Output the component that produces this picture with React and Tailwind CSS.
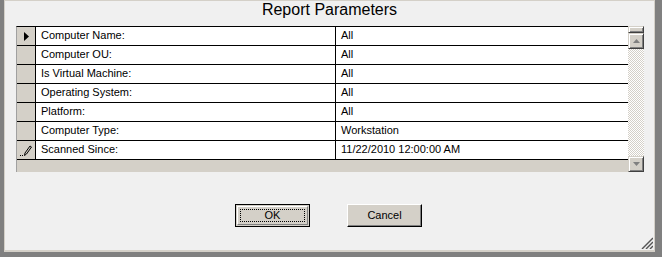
import React from 'react';

const ROWS = [
  { label: 'Computer Name:', value: 'All' },
  { label: 'Computer OU:', value: 'All' },
  { label: 'Is Virtual Machine:', value: 'All' },
  { label: 'Operating System:', value: 'All' },
  { label: 'Platform:', value: 'All' },
  { label: 'Computer Type:', value: 'Workstation' },
  { label: 'Scanned Since:', value: '11/22/2010 12:00:00 AM' },
];

// classic raised 3D look for scrollbar parts
const raised =
  'bg-[#d4d0c8] border border-t-[#d4d0c8] border-l-[#d4d0c8] border-b-[#404040] border-r-[#404040] shadow-[inset_1px_1px_#ffffff,inset_-1px_-1px_#808080]';

const RowMarker = ({ index, last }) => {
  if (index === 0) {
    return (
      <svg width="5" height="9" viewBox="0 0 5 9" className="mt-[5px] ml-[7px]">
        <polygon points="0,0 5,4.5 0,9" fill="#000" />
      </svg>
    );
  }
  if (last) {
    return (
      <svg width="12" height="12" viewBox="0 0 12 12" className="mt-[4px] ml-[3px]">
        <rect x="0" y="10" width="1" height="1" fill="#000" />
        <rect x="2" y="10" width="1" height="1" fill="#000" />
        <path d="M4.5 10.5 L5 8 L10 1 L11.5 2 L6.5 9 Z" fill="none" stroke="#000" strokeWidth="1" />
      </svg>
    );
  }
  return null;
};

const ScrollArrow = ({ up }) => (
  <svg width="7" height="4" viewBox="0 0 7 4">
    <polygon points={up ? '3.5,0 7,4 0,4' : '0,0 7,0 3.5,4'} fill="#808080" />
  </svg>
);

export default function App() {
  return (
    <div
      className="w-[662px] h-[257px] bg-[#808080] pl-[4px] pr-[7px] pb-[5px] text-black"
      style={{ fontFamily: '"Liberation Sans", Arial, sans-serif' }}
    >
      <div className="relative h-full bg-[#f0f0f0] border-t border-l border-r border-b-2 border-[#d4d0c8]">
        {/* title */}
        <div className="h-[25px] text-center text-[16px] leading-[18px]">Report Parameters</div>

        {/* parameter grid */}
        <div className="ml-[11px] w-[628px] h-[146px] flex">
          <div className="flex-1 flex flex-col bg-[#d4d0c8] border-l border-[#a0a0a0] border-t border-t-black">
            {ROWS.map((r, i) => (
              <div key={r.label} className="h-[19px] flex border-b border-black text-[11px] leading-[15px]">
                <div className="w-[19px] border-r border-black bg-[#d4d0c8]">
                  <RowMarker index={i} last={i === ROWS.length - 1} />
                </div>
                <div className="w-[300px] border-r border-black bg-white pl-[5px] pt-[1px]">{r.label}</div>
                <div className="flex-1 bg-white pl-[5px] pt-[1px]">{r.value}</div>
              </div>
            ))}
          </div>

          {/* vertical scrollbar */}
          <div className="w-[16px] flex flex-col">
            <div className={`h-[7px] ${raised}`} />
            <div className={`h-[16px] flex items-center justify-center ${raised}`}>
              <ScrollArrow up />
            </div>
            <div className="flex-1 bg-[image:repeating-conic-gradient(#d4d0c8_0%_25%,#ffffff_0%_50%)] bg-[length:2px_2px]" />
            <div className={`h-[16px] flex items-center justify-center ${raised}`}>
              <ScrollArrow />
            </div>
          </div>
        </div>

        {/* buttons */}
        <div className="mt-[32px] flex justify-center gap-[37px] pr-[2px] text-[11px]">
          <button className="w-[75px] h-[23px] border border-black bg-[#d4d0c8] p-[1px]">
            <div className="h-full border border-t-white border-l-white border-b-[#808080] border-r-[#808080] p-[2px]">
              <div className="h-full border border-dotted border-black flex items-center justify-center leading-[13px]">
                OK
              </div>
            </div>
          </button>
          <button className="w-[75px] h-[23px] border border-t-white border-l-white border-b-black border-r-black bg-[#d4d0c8] shadow-[inset_-1px_-1px_#808080] flex items-center justify-center">
            Cancel
          </button>
        </div>

        {/* size grip */}
        <svg width="12" height="12" viewBox="0 0 12 12" className="absolute right-[1px] bottom-[1px]">
          <g stroke="#555" strokeWidth="1.4">
            <line x1="12" y1="1" x2="1" y2="12" />
            <line x1="12" y1="5" x2="5" y2="12" />
            <line x1="12" y1="9" x2="9" y2="12" />
          </g>
        </svg>
      </div>
    </div>
  );
}
